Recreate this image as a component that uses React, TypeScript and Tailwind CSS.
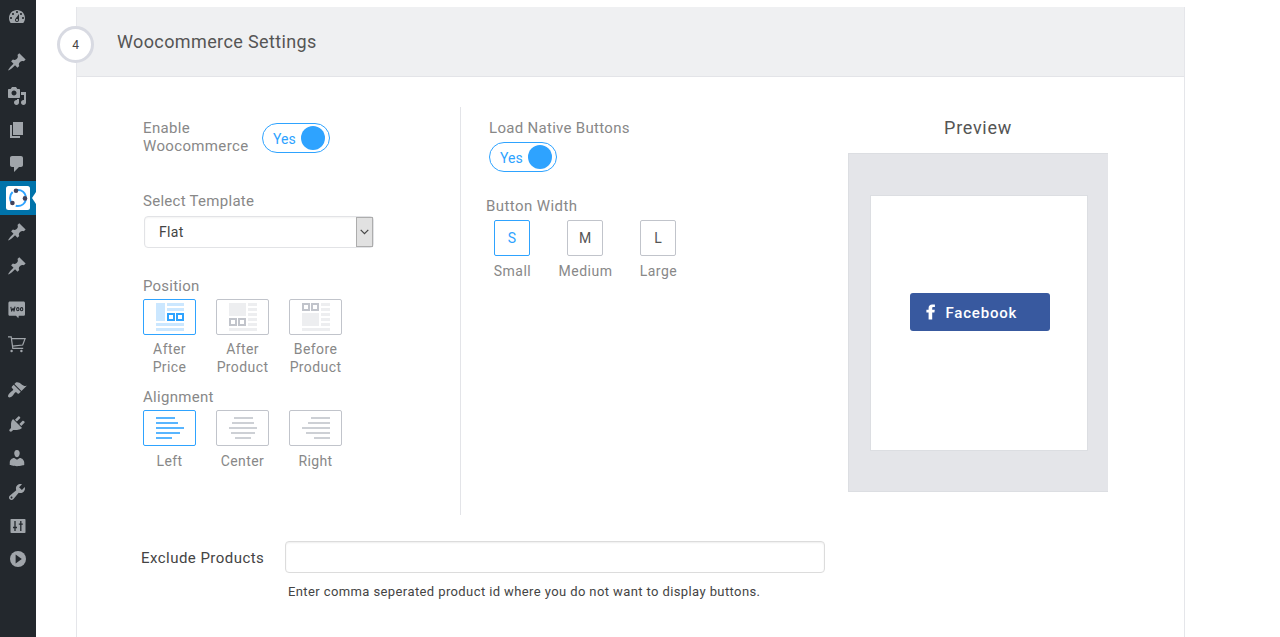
import type { ReactNode } from "react";

const PIN =
  "M10.44 3.02l1.82-1.82 6.36 6.35-1.83 1.82c-1.05-.68-2.48-.57-3.41.36l-.75.75c-.92.93-1.04 2.35-.35 3.41l-1.83 1.82-2.41-2.41-2.8 2.79c-.42.42-3.38 2.71-3.8 2.29s1.86-3.39 2.28-3.81l2.79-2.79L4.1 9.36l1.83-1.82c1.05.69 2.48.57 3.4-.36l.75-.75c.93-.92 1.05-2.35.36-3.41z";
const DASHBOARD =
  "M3.76 16h12.48c1.1-1.37 1.76-3.11 1.76-5 0-4.42-3.58-8-8-8s-8 3.58-8 8c0 1.89.66 3.63 1.76 5zM10 4c.55 0 1 .45 1 1s-.45 1-1 1-1-.45-1-1 .45-1 1-1zM6 6c.55 0 1 .45 1 1s-.45 1-1 1-1-.45-1-1 .45-1 1-1zm8 0c.55 0 1 .45 1 1s-.45 1-1 1-1-.45-1-1 .45-1 1-1zm-5.37 5.55L12 7v6c0 1.1-.9 2-2 2s-2-.9-2-2c0-.57.24-1.08.63-1.45zM4 10c.55 0 1 .45 1 1s-.45 1-1 1-1-.45-1-1 .45-1 1-1zm12 0c.55 0 1 .45 1 1s-.45 1-1 1-1-.45-1-1 .45-1 1-1zm-5 3c0-.55-.45-1-1-1s-1 .45-1 1 .45 1 1 1 1-.45 1-1z";
const MEDIA =
  "M13 11V4c0-.55-.45-1-1-1h-1.67L9 1H5L3.67 3H2c-.55 0-1 .45-1 1v7c0 .55.45 1 1 1h10c.55 0 1-.45 1-1zM7 4.5c1.38 0 2.5 1.12 2.5 2.5S8.38 9.5 7 9.5 4.5 8.38 4.5 7 5.62 4.5 7 4.5zM14 6h5v10.5c0 1.38-1.12 2.5-2.5 2.5S14 17.88 14 16.5s1.12-2.5 2.5-2.5c.17 0 .34.02.5.05V9h-3V6zm-4 8.05V13h2v3.5c0 1.38-1.12 2.5-2.5 2.5S7 17.88 7 16.5 8.12 14 9.5 14c.17 0 .34.02.5.05z";
const PAGES = "M6 15V2h10v13H6zm-1 1h8v2H3V5h2v11z";
const COMMENTS =
  "M5 2h9c1.1 0 2 .9 2 2v7c0 1.1-.9 2-2 2h-2l-5 5v-5H5c-1.1 0-2-.9-2-2V4c0-1.1.9-2 2-2z";
const APPEARANCE =
  "M14.48 11.06L7.41 3.99l1.5-1.5c.5-.56 2.3-.47 3.51.32 1.21.8 1.43 1.28 2.91 2.1 1.18.64 2.45 1.26 4.45.85zm-.71.71L6.7 4.7 4.93 6.47c-.39.39-.39 1.02 0 1.41l1.06 1.06c.39.39.39 1.03 0 1.42-.6.6-1.43 1.11-2.21 1.69-.35.26-.7.53-1.01.84C1.43 14.23.4 16.08 1.4 17.07c.99 1 2.84-.03 4.18-1.36.31-.31.58-.66.85-1.02.57-.78 1.08-1.61 1.69-2.21.39-.39 1.02-.39 1.41 0l1.06 1.06c.39.39 1.02.39 1.41 0z";
const PLUGINS =
  "M13.11 4.36L9.87 7.6 8 5.73l3.24-3.24c.35-.34 1.05-.2 1.56.32.52.51.66 1.21.31 1.55zm-8 1.77l.91-1.12 9.01 9.01-1.19.84c-.71.71-2.63 1.16-3.82 1.16H6.14L4.9 17.26c-.59.59-1.54.59-2.12 0-.59-.58-.59-1.53 0-2.12l1.24-1.24v-3.88c0-1.13.4-3.19 1.09-3.89zm7.26 3.97l3.24-3.24c.34-.35 1.04-.21 1.55.31.52.51.66 1.21.31 1.55l-3.24 3.25z";
const USERS =
  "M10 9.25c-2.27 0-2.73-3.44-2.73-3.44C7 4.02 7.82 2 9.97 2c2.16 0 2.98 2.02 2.71 3.81 0 0-.41 3.44-2.68 3.44zm0 2.57L12.72 10c2.39 0 4.52 2.33 4.52 4.53v2.49s-3.65 1.13-7.24 1.13c-3.65 0-7.24-1.13-7.24-1.13v-2.49c0-2.25 1.94-4.48 4.47-4.48z";
const TOOLS =
  "M16.68 9.77c-1.34 1.34-3.3 1.67-4.95.99l-5.41 6.52c-.99.99-2.59.99-3.58 0s-.99-2.59 0-3.57l6.52-5.42c-.68-1.65-.35-3.61.99-4.95 1.28-1.28 3.12-1.62 4.72-1.06l-2.89 2.89 2.82 2.82 2.86-2.87c.53 1.58.18 3.39-1.08 4.65zM3.81 16.21c.4.39 1.04.39 1.43 0 .4-.4.4-1.04 0-1.43-.39-.4-1.03-.4-1.43 0-.39.39-.39 1.03 0 1.43z";

function Glyph({ d }: { d: string }) {
  return (
    <svg viewBox="0 0 20 20" className="mr-0.5 size-5" fill="#a0a5aa" fillRule="evenodd">
      <path d={d} />
    </svg>
  );
}

function Item({ children }: { children: ReactNode }) {
  return <div className="flex h-[34px] w-9 shrink-0 items-center justify-center">{children}</div>;
}

function ShareLogo() {
  return (
    <svg viewBox="0 0 24 24" className="size-6">
      <rect width="24" height="24" rx="2.5" fill="#fff" />
      <circle cx="12" cy="12" r="8" fill="none" stroke="#2ea3ff" strokeWidth="2" strokeDasharray="12.8 3.95" strokeDashoffset="-2" />
      <circle cx="10" cy="4.8" r="2.3" fill="#42425a" />
      <circle cx="19" cy="12.4" r="2.3" fill="#42425a" />
      <circle cx="6.4" cy="17" r="2.3" fill="#42425a" />
    </svg>
  );
}

function Sidebar() {
  return (
    <nav className="flex h-full w-9 shrink-0 flex-col bg-[#23282d]">
      <Item><Glyph d={DASHBOARD} /></Item>
      <div className="h-[11px]" />
      <Item><Glyph d={PIN} /></Item>
      <Item><Glyph d={MEDIA} /></Item>
      <Item><Glyph d={PAGES} /></Item>
      <Item><Glyph d={COMMENTS} /></Item>
      <div className="relative flex h-[34px] w-9 items-center justify-center bg-[#0073aa]">
        <ShareLogo />
        <svg viewBox="0 0 4 12" className="absolute right-0 top-[11px] h-3 w-1">
          <path d="M4 0v12L0 6z" fill="#fff" />
        </svg>
      </div>
      <Item><Glyph d={PIN} /></Item>
      <Item><Glyph d={PIN} /></Item>
      <div className="h-[10px]" />
      <Item>
        <svg viewBox="0 0 20 20" className="mr-0.5 size-5">
          <path d="M3 1.6h13.4c1 0 1.6.6 1.6 1.6v11c0 1-.6 1.6-1.6 1.6h-4.6l-.5 2.4-2.3-2.4H3c-1 0-1.6-.6-1.6-1.6v-11c0-1 .6-1.6 1.6-1.6z" fill="#a0a5aa" />
          <path d="M3.8 6.9l.9 4.2 1.4-2.9.9 2.9 1-4.4" fill="none" stroke="#23282d" strokeWidth="1.1" strokeLinejoin="round" />
          <ellipse cx="10.8" cy="9.2" rx="1.2" ry="1.6" fill="none" stroke="#23282d" strokeWidth="1.1" />
          <ellipse cx="14.6" cy="9.2" rx="1.2" ry="1.6" fill="none" stroke="#23282d" strokeWidth="1.1" />
        </svg>
      </Item>
      <Item>
        <svg viewBox="0 0 20 20" className="mr-0.5 size-5" fill="none" stroke="#a0a5aa" strokeWidth="1.2">
          <path d="M1 2.8h3.2l1.6 11.6h10.4M4.5 4.6h13.6l-2.4 6.4-10.4 1.2" />
          <circle cx="4.6" cy="17" r="1.2" fill="#a0a5aa" stroke="none" />
          <circle cx="14.4" cy="17" r="1.2" fill="#a0a5aa" stroke="none" />
        </svg>
      </Item>
      <div className="h-3" />
      <Item><Glyph d={APPEARANCE} /></Item>
      <Item><Glyph d={PLUGINS} /></Item>
      <Item><Glyph d={USERS} /></Item>
      <Item><Glyph d={TOOLS} /></Item>
      <Item>
        <svg viewBox="0 0 16 14" className="-ml-px h-3.5 w-4">
          <rect x=".5" width="15" height="14" rx=".8" fill="#a0a5aa" />
          <path d="M5 2v10M3 8.5h4M10.8 2v10M8.8 5.2h4" stroke="#23282d" strokeWidth="1.3" />
        </svg>
      </Item>
      <div className="-mt-px">
        <Item>
          <svg viewBox="0 0 20 20" className="size-5">
            <circle cx="10" cy="10" r="8" fill="#a0a5aa" />
            <path d="M7.6 5.6v8.8l6.2-4.4z" fill="#23282d" />
          </svg>
        </Item>
      </div>
    </nav>
  );
}

function Toggle() {
  return (
    <div className="flex h-[30px] w-[68px] items-center justify-between rounded-full border border-[#2ea3ff] bg-white pl-[10px] pr-1 text-[#2ea3ff]">
      <span className="pt-[2px] text-[14px] tracking-[0.1px]">Yes</span>
      <span className="size-6 rounded-full bg-[#2ea3ff]" />
    </div>
  );
}

function Choice({ active, label, children }: { active?: boolean; label: ReactNode; children: ReactNode }) {
  return (
    <div className="flex w-[53px] flex-col items-center">
      <div
        className={
          active
            ? "flex h-9 w-[53px] items-center justify-center rounded-xs border border-[#2ea3ff]"
            : "flex h-9 w-[53px] items-center justify-center rounded-xs border border-[#c1c4cb]"
        }
      >
        {children}
      </div>
      <div className="mt-[5px] whitespace-nowrap text-center text-[14px] leading-[18px] tracking-[0.4px]">{label}</div>
    </div>
  );
}

function Size({ active, letter, label }: { active?: boolean; letter: string; label: string }) {
  return (
    <div className="flex w-[73px] flex-col items-center">
      <div
        className={
          active
            ? "flex size-9 items-center justify-center rounded-xs border border-[#2ea3ff] pl-px text-[14px] text-[#2ea3ff]"
            : "flex size-9 items-center justify-center rounded-xs border border-[#c1c4cb] pl-px text-[14px] text-[#555]"
        }
      >
        {letter}
      </div>
      <div className="mt-[6px] pl-[2px] text-[14px] leading-[18px] tracking-[0.5px]">{label}</div>
    </div>
  );
}

function Lines({ rows, color }: { rows: [number, number][]; color: string }) {
  return (
    <svg viewBox="0 0 28 22" className="h-[22px] w-7" fill={color}>
      {rows.map(([x, w], i) => (
        <rect key={i} x={x} y={i * 5} width={w} height="2" />
      ))}
    </svg>
  );
}

export default function App() {
  return (
    <div className="flex h-[637px] w-[1280px] overflow-hidden bg-white font-['Roboto',sans-serif] text-[#888]">
      <Sidebar />
      <main className="flex-1 pl-10 pt-[7px]">
        <section className="h-[640px] w-[1109px] border-x border-[#e5e6ea]">
          <header className="relative flex h-[70px] items-center border-b border-[#e3e4e8] bg-[#eff0f2] pl-10">
            <span className="absolute -left-5 top-[19px] flex size-[37px] items-center justify-center rounded-full border-[3px] border-[#d8dae2] bg-white text-[12px] text-[#444]">
              4
            </span>
            <h1 className="text-[18px] leading-6 tracking-[0.38px] text-[#555]">Woocommerce Settings</h1>
          </header>

          <div className="flex h-[438px] pt-[30px]">
            <div className="h-[408px] w-[384px] border-r border-[#e3e4e8] pl-[66px] pt-3">
              <div className="flex">
                <div className="w-[119px] text-[15px] leading-[18px] tracking-[0.35px]">
                  Enable
                  <br />
                  Woocommerce
                </div>
                <div className="pt-1">
                  <Toggle />
                </div>
              </div>
              <div className="mt-[37px] text-[15px] leading-[18px] tracking-[0.28px]">Select Template</div>
              <div className="ml-px mt-[6px] flex h-8 w-[230px] items-center justify-between rounded border border-[#e2e3e6] pl-[14px] shadow-[inset_0_1px_2px_rgba(0,0,0,0.05)]">
                <span className="text-[14px] tracking-[0.3px] text-[#444]">Flat</span>
                <span className="flex h-[30px] w-[17px] items-center justify-center border border-[#adadad] bg-[#e1e1e1]">
                  <svg viewBox="0 0 9 6" className="h-1.5 w-[9px]" fill="none" stroke="#444" strokeWidth="1.2">
                    <path d="M.7.8l3.8 3.8L8.3.8" />
                  </svg>
                </span>
              </div>
              <div className="mt-[29px] text-[15px] leading-[18px] tracking-[0.22px]">Position</div>
              <div className="mt-[4px] flex gap-5">
                <Choice active label={<>After<br />Price</>}>
                  <svg viewBox="0 0 28 28" className="size-7" fill="#cbe7ff">
                    <path d="M0 0h9v18H0zM11 0h17v3H11zM11 5h17v3H11zM0 20h28v3H0zM0 25h28v3H0z" />
                    <path d="M12 11h6v6h-6zM21 11h6v6h-6z" fill="none" stroke="#2ea3ff" strokeWidth="2" />
                  </svg>
                </Choice>
                <Choice label={<>After<br />Product</>}>
                  <svg viewBox="0 0 28 28" className="size-7" fill="#edeef0">
                    <path d="M0 0h17v13H0zM19 0h9v3h-9zM19 5h9v3h-9zM19 10h9v3h-9zM19 15h9v3h-9zM19 20h9v3h-9zM0 25h28v3H0z" />
                    <path d="M1 16h6v6H1zM10 16h6v6h-6z" fill="none" stroke="#c1c4cb" strokeWidth="2" />
                  </svg>
                </Choice>
                <Choice label={<>Before<br />Product</>}>
                  <svg viewBox="0 0 28 28" className="size-7" fill="#edeef0">
                    <path d="M0 10h17v13H0zM19 0h9v3h-9zM19 5h9v3h-9zM19 10h9v3h-9zM19 15h9v3h-9zM19 20h9v3h-9zM0 25h28v3H0z" />
                    <path d="M1 1h6v6H1zM10 1h6v6h-6z" fill="none" stroke="#c1c4cb" strokeWidth="2" />
                  </svg>
                </Choice>
              </div>
              <div className="mt-[12px] text-[15px] leading-[18px] tracking-[0.3px]">Alignment</div>
              <div className="mt-[4px] flex gap-5">
                <Choice active label={<span className="block pt-px">Left</span>}>
                  <Lines color="#58b5ff" rows={[[0, 19], [0, 22], [0, 28], [0, 24], [0, 16]]} />
                </Choice>
                <Choice label={<span className="block pt-px">Center</span>}>
                  <Lines color="#cdd0d5" rows={[[5, 19], [3, 22], [0, 28], [2, 24], [6, 16]]} />
                </Choice>
                <Choice label={<span className="block pt-px">Right</span>}>
                  <Lines color="#cdd0d5" rows={[[9, 19], [6, 22], [0, 28], [4, 24], [12, 16]]} />
                </Choice>
              </div>
            </div>

            <div className="w-[387px] pl-[28px] pt-3">
              <div className="text-[15px] leading-[18px] tracking-[0.3px]">Load Native Buttons</div>
              <div className="mt-[5px]">
                <Toggle />
              </div>
              <div className="-ml-[3px] mt-[25px] text-[15px] leading-[18px] tracking-[0.42px]">Button Width</div>
              <div className="-ml-[14px] mt-[5px] flex">
                <Size active letter="S" label="Small" />
                <Size letter="M" label="Medium" />
                <Size letter="L" label="Large" />
              </div>
            </div>

            <div className="flex w-[260px] flex-col items-center pt-[9px]">
              <h2 className="text-[18px] leading-6 tracking-[0.7px] text-[#555]">Preview</h2>
              <div className="mt-[13px] flex h-[339px] w-[260px] justify-center border border-r-0 border-[#dcdee2] bg-[#e4e5e9] pt-[41px]">
                <div className="flex h-[256px] w-[218px] items-center justify-center border border-[#dcdee2] bg-white">
                  <div className="ml-[2px] mt-[-22px] flex h-[38px] w-[140px] items-center rounded-[3px] bg-[#38599f] pl-4 text-white">
                    <svg viewBox="0 0 10 16" className="h-4 w-[10px]" fill="#fff">
                      <path d="M2.6 15.4V8.6H.4V5.7h2.2V3.9C2.6 1.6 4 .4 6.1.4c1 0 1.9.1 2.8.1v2.6H7.5c-1 0-1.3.4-1.3 1.2v1.4h2.6l-.4 2.9H6.2v6.8z" />
                    </svg>
                    <span className="ml-[10px] pt-[2px] text-[15px] font-medium tracking-[0.8px]">Facebook</span>
                  </div>
                </div>
              </div>
            </div>
          </div>

          <div className="flex pl-16 pt-[26px] text-[#444]">
            <label className="w-[144px] pt-[8px] text-[15px] leading-[18px] tracking-[0.46px]">Exclude Products</label>
            <div>
              <input className="block h-8 w-[540px] rounded border border-[#dcdcdc] bg-white shadow-[inset_0_1px_2px_rgba(0,0,0,0.07)]" />
              <p className="ml-[3px] mt-[10px] text-[13px] leading-[18px] tracking-[0.4px]">
                Enter comma seperated product id where you do not want to display buttons.
              </p>
            </div>
          </div>
        </section>
      </main>
    </div>
  );
}
